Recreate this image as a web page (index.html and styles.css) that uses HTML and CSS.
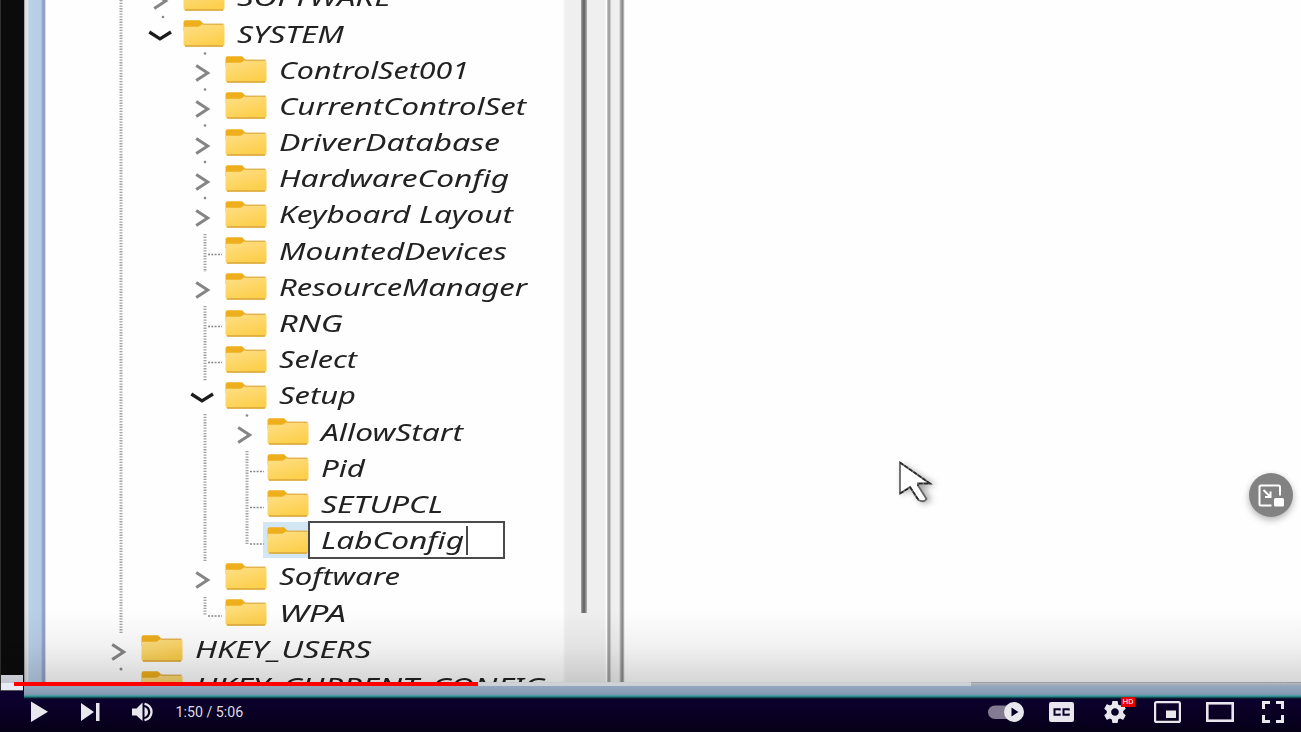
FILE: index.html
```html
<!DOCTYPE html>
<html lang="en">
<head>
<meta charset="utf-8">
<title>Video player</title>
<link rel="stylesheet" href="styles.css">
</head>
<body>
<svg class="defs" aria-hidden="true">
  <defs>
    <linearGradient id="body-fill" x1="0" y1="0" x2="0.5" y2="1">
      <stop offset="0" stop-color="#ffe08a"/><stop offset="1" stop-color="#fccf4c"/>
    </linearGradient>
    <symbol id="folder" viewBox="0 0 42 36">
      <path d="M0.5 7.5Q0.5 5.300 2.800 5.300H17L21 9.200V16H0.5Z" fill="#efae1c"/>
      <path d="M0.5 12.800Q0.5 11.800 2 11.800H15.500L20 9H39.500Q41.500 9 41.500 11V28.700Q41.500 31.400 39 31.400H3Q0.5 31.400 0.5 28.700Z" fill="url(#body-fill)"/>
      <path d="M20 9.200H40.500" stroke="#dcaa42" stroke-width="1.200"/>
      <path d="M2 31H40" stroke="#d9a63a" stroke-width="1.300"/>
    </symbol>
    <symbol id="closed" viewBox="0 0 42 36"><path d="M13.200 14.500L24.700 22L13.200 29.600" fill="none" stroke="#858585" stroke-width="3"/></symbol>
    <symbol id="open" viewBox="0 0 42 36"><path d="M8.300 17L19 23.800L30 17" fill="none" stroke="#1c1c1c" stroke-width="3.300"/></symbol>
  </defs>
</svg>
<main class="player">
  <div class="video">
    <div class="backdrop"><div class="chip"></div></div>
    <div class="frame">
      <div class="edge"></div>
      <div class="panes">
        <div class="tree">
          <div class="row l1"><svg class="twisty"><use href="#closed"/></svg><svg class="folder"><use href="#folder"/></svg><svg class="label"><text x="0" y="26.2" textLength="154" lengthAdjust="spacingAndGlyphs">SOFTWARE</text></svg></div>
          <div class="row l1"><svg class="twisty"><use href="#open"/></svg><svg class="folder"><use href="#folder"/></svg><svg class="label"><text x="0" y="26.2" textLength="107" lengthAdjust="spacingAndGlyphs">SYSTEM</text></svg></div>
          <div class="row l2"><svg class="twisty"><use href="#closed"/></svg><svg class="folder"><use href="#folder"/></svg><svg class="label"><text x="0" y="26.2" textLength="190" lengthAdjust="spacingAndGlyphs">ControlSet001</text></svg></div>
          <div class="row l2"><svg class="twisty"><use href="#closed"/></svg><svg class="folder"><use href="#folder"/></svg><svg class="label"><text x="0" y="26.2" textLength="247" lengthAdjust="spacingAndGlyphs">CurrentControlSet</text></svg></div>
          <div class="row l2"><svg class="twisty"><use href="#closed"/></svg><svg class="folder"><use href="#folder"/></svg><svg class="label"><text x="0" y="26.2" textLength="221" lengthAdjust="spacingAndGlyphs">DriverDatabase</text></svg></div>
          <div class="row l2"><svg class="twisty"><use href="#closed"/></svg><svg class="folder"><use href="#folder"/></svg><svg class="label"><text x="0" y="26.2" textLength="230" lengthAdjust="spacingAndGlyphs">HardwareConfig</text></svg></div>
          <div class="row l2"><svg class="twisty"><use href="#closed"/></svg><svg class="folder"><use href="#folder"/></svg><svg class="label"><text x="0" y="26.2" textLength="234" lengthAdjust="spacingAndGlyphs">Keyboard Layout</text></svg></div>
          <div class="row l2"><svg class="twisty"></svg><svg class="folder"><use href="#folder"/></svg><svg class="label"><text x="0" y="26.2" textLength="228" lengthAdjust="spacingAndGlyphs">MountedDevices</text></svg></div>
          <div class="row l2"><svg class="twisty"><use href="#closed"/></svg><svg class="folder"><use href="#folder"/></svg><svg class="label"><text x="0" y="26.2" textLength="248" lengthAdjust="spacingAndGlyphs">ResourceManager</text></svg></div>
          <div class="row l2"><svg class="twisty"></svg><svg class="folder"><use href="#folder"/></svg><svg class="label"><text x="0" y="26.2" textLength="64" lengthAdjust="spacingAndGlyphs">RNG</text></svg></div>
          <div class="row l2"><svg class="twisty"></svg><svg class="folder"><use href="#folder"/></svg><svg class="label"><text x="0" y="26.2" textLength="78" lengthAdjust="spacingAndGlyphs">Select</text></svg></div>
          <div class="row l2"><svg class="twisty"><use href="#open"/></svg><svg class="folder"><use href="#folder"/></svg><svg class="label"><text x="0" y="26.2" textLength="77" lengthAdjust="spacingAndGlyphs">Setup</text></svg></div>
          <div class="row l3"><svg class="twisty"><use href="#closed"/></svg><svg class="folder"><use href="#folder"/></svg><svg class="label"><text x="0" y="26.2" textLength="142" lengthAdjust="spacingAndGlyphs">AllowStart</text></svg></div>
          <div class="row l3"><svg class="twisty"></svg><svg class="folder"><use href="#folder"/></svg><svg class="label"><text x="0" y="26.2" textLength="44" lengthAdjust="spacingAndGlyphs">Pid</text></svg></div>
          <div class="row l3"><svg class="twisty"></svg><svg class="folder"><use href="#folder"/></svg><svg class="label"><text x="0" y="26.2" textLength="122" lengthAdjust="spacingAndGlyphs">SETUPCL</text></svg></div>
          <div class="row l3 editing"><svg class="twisty"></svg><svg class="folder"><use href="#folder"/></svg><div class="edit"><svg class="label"><text x="0" y="26.2" textLength="143" lengthAdjust="spacingAndGlyphs">LabConfig</text></svg><i class="caret"></i></div></div>
          <div class="row l2"><svg class="twisty"><use href="#closed"/></svg><svg class="folder"><use href="#folder"/></svg><svg class="label"><text x="0" y="26.2" textLength="121" lengthAdjust="spacingAndGlyphs">Software</text></svg></div>
          <div class="row l2"><svg class="twisty"></svg><svg class="folder"><use href="#folder"/></svg><svg class="label"><text x="0" y="26.2" textLength="67" lengthAdjust="spacingAndGlyphs">WPA</text></svg></div>
          <div class="row l0"><svg class="twisty"><use href="#closed"/></svg><svg class="folder"><use href="#folder"/></svg><svg class="label"><text x="0" y="26.2" textLength="176" lengthAdjust="spacingAndGlyphs">HKEY_USERS</text></svg></div>
          <div class="row l0"><svg class="twisty"></svg><svg class="folder"><use href="#folder"/></svg><svg class="label"><text x="0" y="27.2" textLength="351" lengthAdjust="spacingAndGlyphs">HKEY_CURRENT_CONFIG</text></svg></div>
          <!-- dotted branch lines -->
          <svg class="guides" viewBox="46 0 517 682">
            <g class="stem">
              <path d="M121 0V633"/>
              <path d="M205 234V272M205 306V381M205 414V562M205 597V616"/>
              <path d="M247 451V544"/>
            </g>
            <path class="arm" d="M208 254.500H222M208 326.500H222M208 362.500H222M208 616H222M250 471.500H264M250 507.500H264M250 544H264"/>
            <g fill="#888"><circle cx="163" cy="17" r="1.3"/><circle cx="205" cy="53.500" r="1.3"/><circle cx="205" cy="89.500" r="1.3"/><circle cx="205" cy="125.500" r="1.3"/><circle cx="205" cy="162" r="1.3"/><circle cx="205" cy="198" r="1.3"/><circle cx="247" cy="415.500" r="1.3"/><circle cx="121" cy="669" r="1.5"/></g>
          </svg>
        </div>
        <div class="scroll"><div class="thumb"></div></div>
        <div class="splitter"></div>
        <div class="values"></div>
      </div>
      <div class="border-bottom"></div>
    </div>
  </div>
  <div class="shade"></div>
  <svg class="cursor" viewBox="0 0 60 60">
    <path class="cursor-shadow" d="M13 15V46L23 40L33 55L43 52L35 38L47 36Z"/>
    <path d="M11 13.500V44.500L21 38L29.500 51Q34.500 54 37.500 50L29 36.500V34.500L41 34.500Z" fill="#fff" stroke="#666" stroke-width="1.800"/>
    <path d="M11 13.500L41 34.500H29V37M21 38L29.500 51M11 44.500L21 38.500" fill="none" stroke="#2a2a2a" stroke-width="1.600" stroke-dasharray="4 1.500"/>
  </svg>
  <button class="pip" aria-label="Picture in picture">
    <svg viewBox="0 0 44 44"><path d="M22.500 32.500H12Q10.500 32.500 10.500 31V14Q10.500 12.500 12 12.500H29.500Q31 12.500 31 14V22.500" fill="none" stroke="#fff" stroke-width="2"/><path d="M14.500 17L21 23.500M21.500 18.500V24H16" fill="none" stroke="#fff" stroke-width="2"/><rect x="25" y="25" width="10" height="8.500" rx="1.500" fill="#fff"/></svg>
  </button>
  <footer class="chrome">
    <div class="progress"><div class="loaded"></div><div class="played"></div></div>
    <div class="controls">
      <svg class="ico play" viewBox="0 0 18 22"><path d="M1 0.500L18 10.800L1 21Z"/></svg>
      <svg class="ico next" viewBox="0 0 19 18"><path d="M0 0L13 9L0 18ZM15 0H18.500V18H15Z"/></svg>
      <svg class="ico volume" viewBox="0 0 22 20"><path d="M0 6.500H4.500L10.500 0.500V19L4.500 13.500H0ZM12.500 5Q16 6.500 16 10T12.500 15Z"/><path d="M12.500 1.800A8.300 8.300 0 0 1 12.500 18.200" fill="none" stroke="#e9e7ee" stroke-width="2.300"/></svg>
      <span class="time">1:50 / 5:06</span>
      <span class="spacer"></span>
      <svg class="ico auto" viewBox="0 0 37 20"><rect x="0" y="3.500" width="30" height="13.500" rx="6.750" fill="#827b91"/><circle cx="26" cy="10" r="10"/><path d="M23.500 5.500V14.500L30.500 10Z" fill="#0b0128"/></svg>
      <svg class="ico cc" viewBox="0 0 25 20"><rect width="25" height="20" rx="2.200"/><path d="M10.700 8.500V7.200H5.500V12.800H10.700V11.500M19.700 8.500V7.200H14.500V12.800H19.700V11.500" fill="none" stroke="#0b0128" stroke-width="2"/></svg>
      <span class="settings"><svg class="ico" viewBox="2 2 20 20"><path d="M19.430 12.980c.04-.32.07-.64.07-.98s-.03-.66-.07-.98l2.110-1.650c.19-.15.24-.42.12-.64l-2-3.460c-.12-.22-.39-.3-.61-.22l-2.490 1c-.52-.4-1.080-.73-1.690-.98l-.38-2.650C14.460 2.180 14.250 2 14 2h-4c-.25 0-.46.18-.49.42l-.38 2.650c-.61.25-1.170.59-1.690.98l-2.490-1c-.23-.09-.49 0-.61.22l-2 3.460c-.13.22-.07.49.12.64l2.110 1.650c-.04.32-.07.65-.07.98s.03.66.07.98l-2.110 1.650c-.19.15-.24.42-.12.64l2 3.460c.12.22.39.3.61.22l2.490-1c.52.4 1.080.73 1.690.98l.38 2.650c.03.24.24.42.49.42h4c.25 0 .46-.18.49-.42l.38-2.650c.61-.25 1.170-.59 1.690-.98l2.490 1c.23.09.49 0 .61-.22l2-3.460c.12-.22.07-.49-.12-.64l-2.110-1.650zM12 15.500c-1.930 0-3.500-1.570-3.500-3.500s1.570-3.500 3.500-3.500 3.500 1.570 3.500 3.500-1.570 3.500-3.500 3.500z"/></svg><b class="hd">HD</b></span>
      <svg class="ico mini" viewBox="0 0 27 22"><rect x="1.100" y="1.100" width="24.800" height="19.800" rx="1.500" fill="none" stroke="#e9e7ee" stroke-width="2.200"/><rect x="12" y="9.500" width="10" height="7.500"/></svg>
      <svg class="ico theater" viewBox="0 0 28 20"><rect x="1.300" y="1.300" width="25.400" height="17.400" fill="none" stroke="#e9e7ee" stroke-width="2.600"/></svg>
      <svg class="ico full" viewBox="0 0 22 22"><path d="M1.500 8V1.500H8M14 1.500H20.500V8M20.500 14V20.500H14M8 20.500H1.500V14" fill="none" stroke="#e9e7ee" stroke-width="3"/></svg>
    </div>
  </footer>
</main>
</body>
</html>
```
FILE: styles.css
```css
* { box-sizing: border-box; }
body { margin: 0; overflow: hidden; }
.defs { position: absolute; width: 0; height: 0; }
.player { position: relative; width: 1301px; height: 732px; overflow: hidden; background: linear-gradient(#0d0130 695px, #060018 732px); }

/* video picture */
.video { display: flex; height: 699px; }
.backdrop { width: 24px; height: 691px; background: #0b0b0b; border-left: 1px solid #303030; display: flex; align-items: flex-end; }
.chip { width: 22px; height: 16px; background: #e8ebf6; border-bottom: 1px solid #555; }
.frame { flex: 1; display: grid; grid-template-columns: 22px 1fr; grid-template-rows: 682px 17px; }
.edge { background: linear-gradient(90deg, #8a8e94 0, #d8dade 1.5px, #e4e6ea 3.5px, #b9d1e9 5px, #b5cde6 17px, #8a9bc5 19px, #98a5c8 20.5px, #eef2fa 22px); }
.panes { display: flex; min-width: 0; }
.tree { position: relative; width: 517px; height: 682px; overflow: hidden; background: #fefefe; }
.row { display: flex; height: 36.2px; filter: blur(.65px); }
.row:first-child { margin-top: -21.2px; }
.l0 { padding-left: 53px; }
.l1 { padding-left: 95px; }
.l2 { padding-left: 137px; }
.l3 { padding-left: 179px; }
.twisty, .folder { flex: none; width: 42px; height: 36px; }
.label { flex: none; width: 300px; height: 36px; margin: 1.5px 0 0 12.5px; overflow: visible; font: italic 23.5px "Noto Sans", "Open Sans", sans-serif; fill: #222; }
.folder { margin-left: -.5px; }
.editing .folder { background: #d3e6f4; box-shadow: -4px 0 #d3e6f4; }
.edit { position: relative; display: flex; width: 197px; height: 38px; margin: -1px 0 0 -.5px; border: 2px solid #4a4a4a; background: #fff; }
.edit .label { margin: .5px 0 0 11px; width: 145px; }
.caret { width: 2px; height: 29px; margin: 3px 0 0 0; background: #4a4a4a; }
.guides { position: absolute; left: 0; top: 0; width: 517px; height: 682px; }
.stem path { fill: none; stroke: #a2a2a2; stroke-width: 3; stroke-dasharray: 1.3 1.4; }
.arm { fill: none; stroke: #888; stroke-width: 1.5; stroke-dasharray: 2 1.3; }
.scroll { width: 44px; background: linear-gradient(90deg, #fafafa, #efefef 3px, #efefef 42px, #fff 43px); padding-left: 18px; }
.thumb { width: 5.500px; height: 613px; background: linear-gradient(90deg, #aaa, #6b6b6b 2px, #6b6b6b 3.5px, #b5b5b5); }
.splitter { width: 18px; background: linear-gradient(90deg, #ddd 0, #a3a3a3 1px, #a3a3a3 3px, #ededed 4px, #f1f1f1 12px, #9d9d9d 14px, #858585 16px, #ddd 17px, #fff 18px); }
.values { flex: 1; background: #fefefe; }
.border-bottom { grid-column: 1 / 3; background: linear-gradient(#a9adb0 0, #b9bec2 1px, #a0a8b0 3px, #93a8bf 4px, #8699b1 12px, #529ca5 13.5px, #2d858e 14.5px, #06373f 16px, #100025 17px); }
.shade { position: absolute; left: 0; top: 610px; width: 100%; height: 73px; background: linear-gradient(rgba(0,0,0,0), rgba(0,0,0,.05) 50%, rgba(0,0,0,.16)); }

.cursor { position: absolute; left: 889px; top: 449px; width: 60px; height: 60px; filter: blur(.5px); }
.cursor-shadow { fill: rgba(0,0,0,.32); filter: blur(3px); }
.pip { position: absolute; left: 1249px; top: 473px; width: 44px; height: 44px; padding: 0; border: 0; border-radius: 50%; background: #828282; box-shadow: 0 3px 7px rgba(0,0,0,.3); }
.pip svg { display: block; width: 44px; height: 44px; }

/* player controls */
.chrome { position: absolute; left: 0; right: 0; bottom: 0; height: 50px; }
.progress { display: grid; height: 4px; margin: 0 14px; background: rgba(170,178,182,.25); }
.progress > div { grid-area: 1 / 1; height: 4px; }
.loaded { width: 957px; background: rgba(225,228,231,.65); }
.played { width: 464px; background: #f00; }
.controls { display: flex; align-items: center; height: 46px; padding: 5px 17px 0 30px; }
.ico { display: block; flex: none; fill: #e9e7ee; }
.play { width: 18px; height: 22px; }
.next { width: 19px; height: 18px; margin-left: 33px; }
.volume { width: 22px; height: 20px; margin-left: 32px; }
.time { margin-left: 21.500px; font: 14.2px Roboto, sans-serif; color: #dddbe3; }
.spacer { flex: 1; }
.auto { width: 37px; height: 20px; }
.cc { width: 25px; height: 20px; margin-left: 24px; }
.settings { position: relative; margin-left: 30px; width: 22px; height: 22px; }
.settings .ico { width: 22px; height: 22px; }
.hd { position: absolute; left: 17px; top: -4px; width: 14px; height: 10px; background: #e60000; color: #fff; font: 8px/10px Roboto, sans-serif; text-align: center; }
.mini { width: 27px; height: 22px; margin-left: 28px; }
.theater { width: 28px; height: 20px; margin-left: 25px; }
.full { width: 22px; height: 22px; margin-left: 28px; }
```
